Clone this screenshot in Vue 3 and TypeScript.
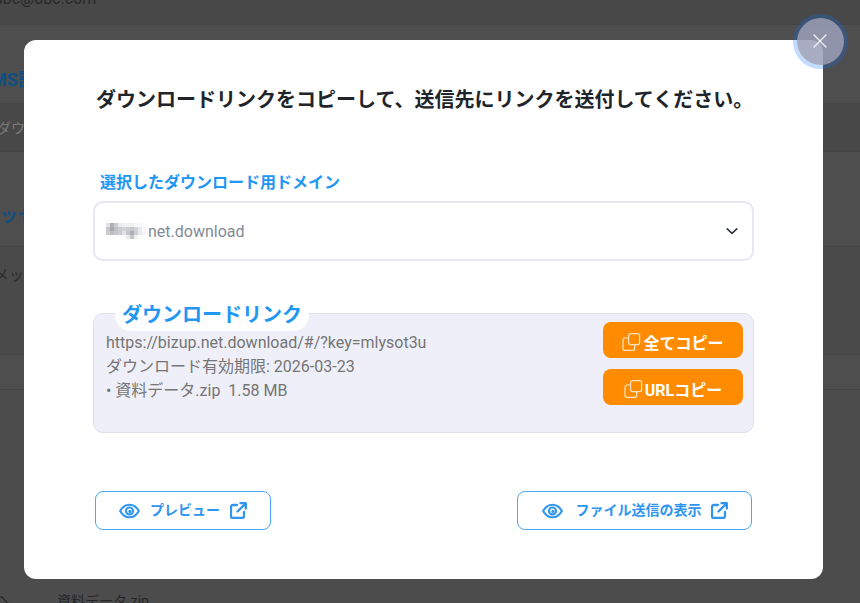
<script setup lang="ts">
import { computed } from 'vue'

const fileLines = [
  'https://bizup.net.download/#/?key=mlysot3u',
  'ダウンロード有効期限: 2026-03-23',
  '• 資料データ.zip  1.58 MB',
]

// モザイク部分 (ドメイン名を隠している)
const mosaicRows = [
  [0.2, 0.55, 0.35, 0.15, 0.1, 0.1, 0.1, 0.05, 0.05, 0.02],
  [0.4, 0.6, 0.45, 0.35, 0.3, 0.35, 0.4, 0.3, 0.15, 0.05],
  [0.35, 0.45, 0.4, 0.35, 0.2, 0.4, 0.55, 0.35, 0.15, 0.08],
  [0.02, 0.02, 0.02, 0.02, 0.02, 0.15, 0.4, 0.1, 0.02, 0.0],
]
const mosaic = computed(() => mosaicRows.flat())
</script>

<template>
  <div class="page">
    <div class="row input top"><span class="mail">abc@abc.com</span></div>
    <div class="row section first"><span class="head sms">SMS設定</span></div>
    <div class="row input dl"><span class="hint">ダウンロード</span></div>
    <div class="row section second"><span class="head msg">メッセージ</span></div>
    <div class="row input msgbox"><span class="note">メッセージ</span></div>
    <div class="row section third"></div>
    <div class="row fileline">
      <svg class="fileicon" width="20" height="20" viewBox="0 0 20 20" fill="none" stroke="#2c2c2c" stroke-width="1.5">
        <path d="M-4 2h6l9 10v8h-15z" />
      </svg>
      <span class="filename">資料データ.zip</span>
    </div>

    <div class="modal">
      <h2 class="title">ダウンロードリンクをコピーして、送信先にリンクを送付してください。</h2>

      <label class="domain-label">選択したダウンロード用ドメイン</label>
      <div class="select">
        <span class="mosaic">
          <i v-for="(o, i) in mosaic" :key="i" :style="{ opacity: o }"></i>
        </span>
        <span class="domain">net.download</span>
        <svg class="chev" width="14" height="14" viewBox="0 0 14 14" fill="none" stroke="#2f3640" stroke-width="1.6" stroke-linecap="round" stroke-linejoin="round">
          <path d="M2.2 4.8 7 9.4l4.8-4.6" />
        </svg>
      </div>

      <div class="panel">
        <div class="legend">ダウンロードリンク</div>
        <div class="lines">
          <div v-for="line in fileLines" :key="line" class="line">{{ line }}</div>
        </div>
        <div class="copies">
          <button class="copy">
            <svg width="19" height="19" viewBox="0 0 19 19" fill="none" stroke="#ffe4c2" stroke-width="1.2">
              <rect x="6.6" y="1.6" width="11" height="11" rx="2" />
              <path d="M6.6 6H3a2 2 0 0 0-2 2v8.4a2 2 0 0 0 2 2h7.6a2 2 0 0 0 2-2v-3.8" />
            </svg>
            全てコピー
          </button>
          <button class="copy">
            <svg width="19" height="19" viewBox="0 0 19 19" fill="none" stroke="#ffe4c2" stroke-width="1.2">
              <rect x="6.6" y="1.6" width="11" height="11" rx="2" />
              <path d="M6.6 6H3a2 2 0 0 0-2 2v8.4a2 2 0 0 0 2 2h7.6a2 2 0 0 0 2-2v-3.8" />
            </svg>
            URLコピー
          </button>
        </div>
      </div>

      <div class="actions">
        <button class="outline preview">
          <svg class="eye" width="21" height="16" viewBox="0 0 22 16" fill="none" stroke="#2f95f0" stroke-width="2.2">
            <path d="M1.2 8C3.6 3.6 7 1.4 11 1.4S18.4 3.6 20.8 8C18.4 12.4 15 14.6 11 14.6S3.6 12.4 1.2 8Z" stroke-linejoin="round" />
            <circle cx="11" cy="8" r="3.7" />
            <circle cx="11.4" cy="8.4" r="1.6" fill="#2f95f0" stroke="none" />
          </svg>
          <span>プレビュー</span>
          <svg width="17" height="17" viewBox="0 0 17 17" fill="none" stroke="#2f95f0" stroke-width="2.3" stroke-linecap="round" stroke-linejoin="round">
            <path d="M7 3H3a2 2 0 0 0-2 2v9a2 2 0 0 0 2 2h9a2 2 0 0 0 2-2v-4" />
            <path d="M7.5 9.5 15.5 1.5M10.5 1.2h5.3v5.3" />
          </svg>
        </button>
        <button class="outline send">
          <svg class="eye" width="21" height="16" viewBox="0 0 22 16" fill="none" stroke="#2f95f0" stroke-width="2.2">
            <path d="M1.2 8C3.6 3.6 7 1.4 11 1.4S18.4 3.6 20.8 8C18.4 12.4 15 14.6 11 14.6S3.6 12.4 1.2 8Z" stroke-linejoin="round" />
            <circle cx="11" cy="8" r="3.7" />
            <circle cx="11.4" cy="8.4" r="1.6" fill="#2f95f0" stroke="none" />
          </svg>
          <span>ファイル送信の表示</span>
          <svg width="17" height="17" viewBox="0 0 17 17" fill="none" stroke="#2f95f0" stroke-width="2.3" stroke-linecap="round" stroke-linejoin="round">
            <path d="M7 3H3a2 2 0 0 0-2 2v9a2 2 0 0 0 2 2h9a2 2 0 0 0 2-2v-4" />
            <path d="M7.5 9.5 15.5 1.5M10.5 1.2h5.3v5.3" />
          </svg>
        </button>
      </div>
    </div>

    <button class="close" aria-label="close">
      <svg width="14" height="14" viewBox="0 0 14 14" stroke="#f2f2f5" stroke-width="1.3" stroke-linecap="round">
        <path d="M1 1l12 12M13 1 1 13" />
      </svg>
    </button>
  </div>
</template>

<style scoped>
.page {
  position: relative;
  width: 860px;
  height: 603px;
  overflow: hidden;
  display: flex;
  flex-direction: column;
  background: #4c4c4c;
  font-family: Roboto, "Noto Sans CJK JP", sans-serif;
}
.row { flex-shrink: 0; border-bottom: 1px solid #454545; overflow: hidden; white-space: nowrap; }
.input { background: #484848; }
.section { background: #4e4e4e; }
.top { height: 24px; }
.mail { display: block; margin-top: -13px; margin-left: -6px; font-size: 16px; line-height: 24px; color: #282828; }
.first { padding-top: 42px; height: 36px; }
.head { display: block; font-size: 18px; font-weight: 700; line-height: 26px; color: #0f4e80; }
.sms { margin-left: -20px; }
.dl { height: 47px; }
.hint { display: block; margin: 13px 0 0 -3px; font-size: 14px; line-height: 22px; color: #7a7a7a; }
.second { height: 43px; padding-top: 51px; }
.msg { margin-left: -18px; }
.msgbox { height: 107px; background: #4a4a4a; }
.note { display: block; margin: 17px 0 0 -6px; font-size: 15px; line-height: 22px; color: #2a2a2a; }
.third { height: 34px; background: #4e4e4e; }
.fileline { flex: 1; display: flex; align-items: flex-start; border: 0; position: relative; background: #4c4c4c; }
.fileicon { position: absolute; left: 0; top: 205px; }
.filename { margin: 201px 0 0 57px; font-size: 14px; line-height: 20px; color: #262626; }

.modal {
  position: absolute;
  left: 24px;
  top: 40px;
  width: 799px;
  height: 539px;
  box-sizing: border-box;
  padding: 44px 69px 0;
  background: #fff;
  border-radius: 12px;
}
.title {
  margin: 0 0 0 3px;
  font-size: 20px;
  line-height: 32px;
  font-weight: 600;
  color: #212529;
  white-space: nowrap;
}
.domain-label {
  display: block;
  margin: 55px 0 0 7px;
  font-size: 16px;
  line-height: 24px;
  font-weight: 600;
  color: #2196f3;
}
.select {
  display: flex;
  align-items: center;
  height: 60px;
  margin-top: 6px;
  padding: 0 13px 0 11px;
  box-sizing: border-box;
  border: 2px solid #e6e6f4;
  border-radius: 10px;
  color: #828b95;
  font-size: 16px;
}
.mosaic {
  display: grid;
  grid-template-columns: repeat(10, 4px);
  grid-auto-rows: 4px;
  width: 40px;
  margin-right: 2px;
}
.mosaic i { display: block; background: #6d7078; }
.domain { flex: 1; }

.panel {
  position: relative;
  display: flex;
  justify-content: space-between;
  height: 120px;
  margin-top: 52px;
  padding: 8px 10px 0 12px;
  box-sizing: border-box;
  background: #eeeff8;
  border: 1px solid #dfe0ee;
  border-radius: 10px;
}
.legend {
  position: absolute;
  left: 21px;
  top: -13px;
  height: 30px;
  padding: 0 7px;
  background: #fff;
  border-radius: 6px 6px 16px 16px;
  font-size: 20px;
  line-height: 28px;
  font-weight: 700;
  color: #2196f3;
}
.lines { padding-top: 9px; }
.line { font-size: 16px; line-height: 24px; color: #757575; white-space: pre; }
.copies { display: flex; flex-direction: column; gap: 11px; }
button { font-family: inherit; cursor: pointer; }
.copy {
  display: flex;
  align-items: center;
  justify-content: center;
  gap: 2px;
  width: 140px;
  height: 36px;
  padding: 3px 0 0;
  border: 0;
  border-radius: 8px;
  background: #ff8c00;
  color: #fff;
  font-size: 16px;
  font-weight: 700;
}

.actions {
  display: flex;
  justify-content: space-between;
  margin: 58px 2px 0;
}
.outline {
  display: flex;
  align-items: center;
  justify-content: center;
  height: 39px;
  padding: 0;
  background: #fff;
  border: 1.5px solid #4aa8f5;
  border-radius: 8px;
  color: #2f95f0;
  font-size: 14px;
  font-weight: 700;
}
.outline span { margin-top: -3px; }
.preview { width: 176px; gap: 10px; }
.send { width: 235px; gap: 9px; }
.send .eye { margin-right: 4px; }

.close {
  position: absolute;
  left: 796.5px;
  top: 17.5px;
  width: 47px;
  height: 47px;
  padding: 0;
  display: flex;
  align-items: center;
  justify-content: center;
  border: 0;
  border-radius: 50%;
  background: rgba(155, 160, 185, 0.86);
  box-shadow: 0 0 0 4px rgba(13, 110, 253, 0.25);
}
</style>
